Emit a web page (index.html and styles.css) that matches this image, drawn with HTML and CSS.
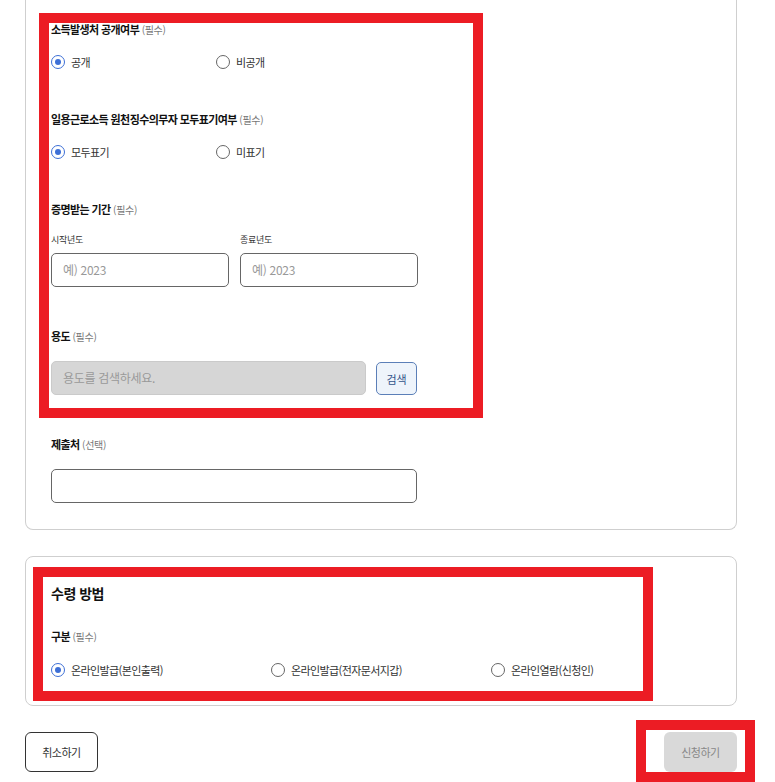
FILE: index.html
```html
<!DOCTYPE html>
<html lang="ko">
<head>
    <meta charset="UTF-8">
    <meta name="viewport" content="width=device-width, initial-scale=1.0">
    <title>증명서 신청</title>
    <link rel="stylesheet" href="styles.css">
</head>
<body>
    <div class="page">
        <div class="card card-cut">
            <div class="field">
                <div class="label">소득발생처 공개여부 <span class="req">(필수)</span></div>
                <div class="options">
                    <label class="option opt-sm"><span class="radio checked"></span>공개</label>
                    <label class="option opt-sm"><span class="radio"></span>비공개</label>
                </div>
            </div>

            <div class="field">
                <div class="label">일용근로소득 원천징수의무자 모두표기여부 <span class="req">(필수)</span></div>
                <div class="options">
                    <label class="option opt-sm"><span class="radio checked"></span>모두표기</label>
                    <label class="option opt-sm"><span class="radio"></span>미표기</label>
                </div>
            </div>

            <div class="field">
                <div class="label">증명받는 기간 <span class="req">(필수)</span></div>
                <div class="period">
                    <div class="period-col">
                        <div class="sublabel">시작년도</div>
                        <div class="input"><span class="placeholder">예) 2023</span></div>
                    </div>
                    <div class="period-col">
                        <div class="sublabel">종료년도</div>
                        <div class="input"><span class="placeholder">예) 2023</span></div>
                    </div>
                </div>
            </div>

            <div class="field">
                <div class="label">용도 <span class="req">(필수)</span></div>
                <div class="search-row">
                    <div class="input input-disabled"><span class="placeholder">용도를 검색하세요.</span></div>
                    <button class="btn-search">검색</button>
                </div>
            </div>

            <div class="field">
                <div class="label">제출처 <span class="req">(선택)</span></div>
                <div class="input input-wide"></div>
            </div>
        </div>

        <div class="card card-receive">
            <h2 class="card-title">수령 방법</h2>
            <div class="field field-tight">
                <div class="label">구분 <span class="req">(필수)</span></div>
                <div class="options">
                    <label class="option opt-lg"><span class="radio checked"></span>온라인발급(본인출력)</label>
                    <label class="option opt-lg"><span class="radio"></span>온라인발급(전자문서지갑)</label>
                    <label class="option opt-lg"><span class="radio"></span>온라인열람(신청인)</label>
                </div>
            </div>
        </div>

        <div class="actions">
            <button class="btn btn-cancel">취소하기</button>
            <button class="btn btn-submit">신청하기</button>
        </div>

        <div class="mark mark-1"></div>
        <div class="mark mark-2"></div>
        <div class="mark mark-3"></div>
    </div>
</body>
</html>
```

FILE: styles.css
```css
body {
    margin: 0;
    padding: 0;
    background: #fff;
    color: #222;
    font-family: "Noto Sans CJK KR", "Noto Sans", sans-serif;
    overflow: hidden;
}
.page {
    position: relative;
    padding: 0 38px 0 25px;
    height: 782px;
}
.card {
    border: 1px solid #cfcfcf;
    border-radius: 8px;
    padding: 0 25px;
    background: #fff;
}
.card-cut {
    border-top: none;
    border-radius: 0 0 8px 8px;
    padding-top: 21px;
    padding-bottom: 26px;
}
.card-receive {
    margin-top: 26px;
    padding-top: 26px;
    padding-bottom: 27px;
}
.card-title {
    margin: 0;
    height: 20px;
    font-size: 14px;
    line-height: 20px;
    font-weight: bold;
    letter-spacing: -0.5px;
    color: #111;
}
.field {
    display: flex;
    flex-direction: column;
    gap: 17px;
}
.field + .field {
    margin-top: 41px;
}
.field-tight {
    margin-top: 25px;
    gap: 18px;
}
.label {
    height: 16px;
    font-size: 11px;
    line-height: 16px;
    font-weight: bold;
    letter-spacing: -0.6px;
    color: #111;
}
.req {
    font-size: 10px;
    line-height: 1;
    font-weight: normal;
    color: #777;
    letter-spacing: -0.3px;
}
.options {
    display: flex;
    height: 16px;
}
.option {
    display: flex;
    align-items: center;
    gap: 6px;
    height: 16px;
    font-size: 11px;
    line-height: 16px;
    letter-spacing: -0.6px;
    color: #333;
}
.opt-sm {
    width: 165px;
}
.opt-lg {
    width: 220px;
}
.radio {
    box-sizing: border-box;
    width: 14px;
    height: 14px;
    border: 1px solid #666;
    border-radius: 50%;
    display: flex;
    align-items: center;
    justify-content: center;
    flex-shrink: 0;
}
.radio.checked {
    border: 1.5px solid #3d6fd6;
}
.radio.checked::after {
    content: "";
    width: 6px;
    height: 6px;
    border-radius: 50%;
    background: #3d6fd6;
}
.period {
    display: flex;
    gap: 11px;
    margin-top: -1px;
}
.period-col {
    display: flex;
    flex-direction: column;
    gap: 6px;
}
.sublabel {
    height: 14px;
    font-size: 9px;
    line-height: 14px;
    color: #333;
    letter-spacing: -0.3px;
}
.input {
    box-sizing: border-box;
    width: 178px;
    height: 34px;
    border: 1px solid #666;
    border-radius: 5px;
    padding: 0 11px;
    display: flex;
    align-items: center;
    background: #fff;
}
.placeholder {
    font-size: 12px;
    line-height: 16px;
    color: #999;
    letter-spacing: -0.3px;
}
.search-row {
    display: flex;
    gap: 10px;
    height: 34px;
}
.input-disabled {
    width: 315px;
    background: #d6d6d6;
    border-color: #cacaca;
}
.input-wide {
    width: 366px;
}
.btn-search {
    box-sizing: border-box;
    width: 41px;
    height: 33px;
    margin-top: 1px;
    border: 1px solid #5b7fb8;
    border-radius: 5px;
    background: #eef4fb;
    color: #34558a;
    font-family: inherit;
    font-size: 11px;
    line-height: 16px;
    padding: 0;
}
.actions {
    display: flex;
    justify-content: space-between;
    margin-top: 26px;
}
.btn {
    box-sizing: border-box;
    width: 73px;
    height: 40px;
    border-radius: 6px;
    font-family: inherit;
    font-size: 11px;
    line-height: 16px;
    letter-spacing: -0.5px;
    padding: 0;
}
.btn-cancel {
    border: 1px solid #333;
    background: #fff;
    color: #333;
}
.btn-submit {
    border: none;
    background: #d9d9d9;
    color: #888;
}
.mark {
    position: absolute;
    box-sizing: border-box;
    border: 10px solid #ec1c24;
}
.mark-1 {
    left: 39px;
    top: 13px;
    width: 444px;
    height: 405px;
}
.mark-2 {
    left: 33px;
    top: 567px;
    width: 620px;
    height: 134px;
}
.mark-3 {
    left: 636px;
    top: 720px;
    width: 119px;
    height: 62px;
}
```
